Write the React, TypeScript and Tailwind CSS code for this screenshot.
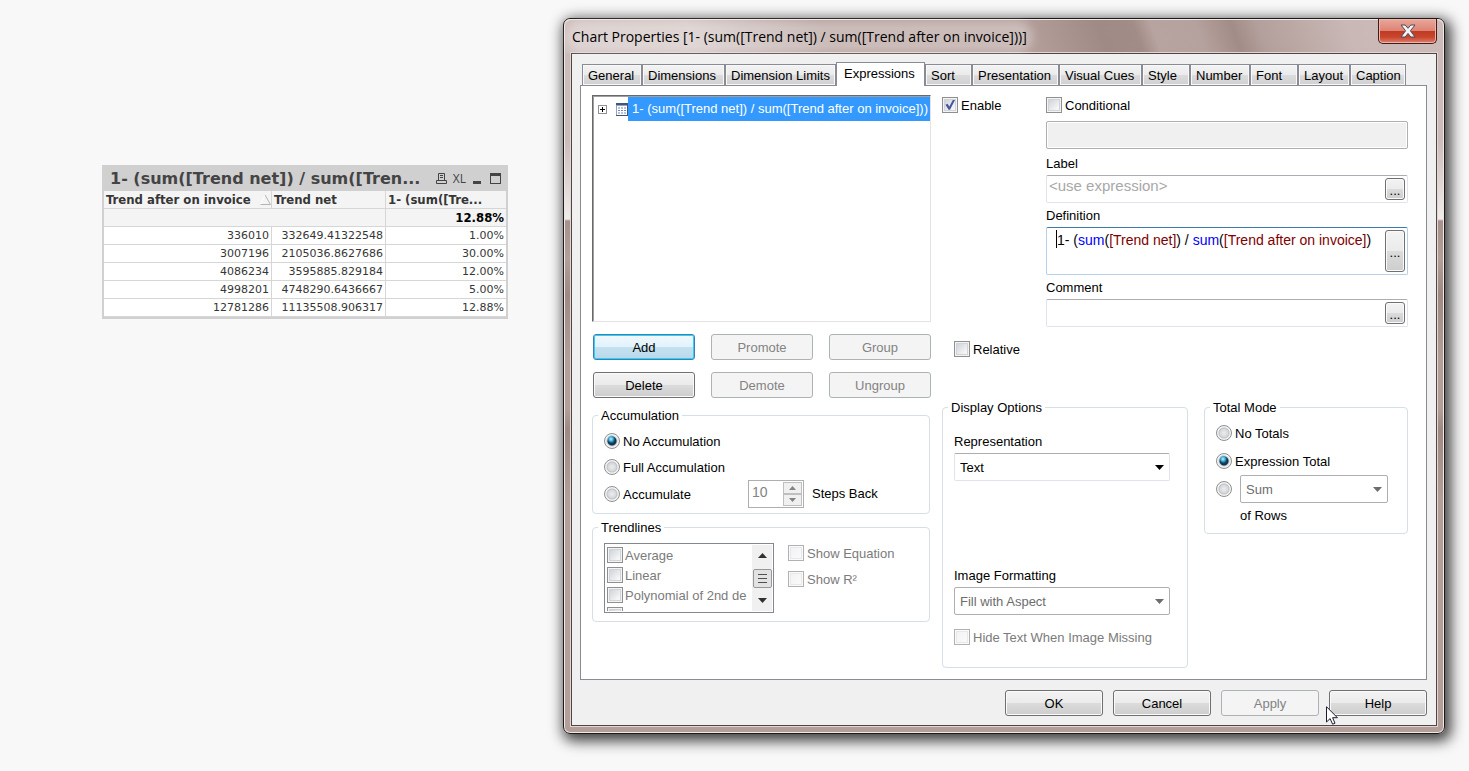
import type { ReactNode } from "react";

const tabs = [
  { label: "General", width: "w-[60px]" },
  { label: "Dimensions", width: "w-[83px]" },
  { label: "Dimension Limits", width: "w-[111px]" },
  { label: "Expressions", width: "w-[89px]", active: true },
  { label: "Sort", width: "w-[47px]" },
  { label: "Presentation", width: "w-[87px]" },
  { label: "Visual Cues", width: "w-[83px]" },
  { label: "Style", width: "w-[48px]" },
  { label: "Number", width: "w-[60px]" },
  { label: "Font", width: "w-[48px]" },
  { label: "Layout", width: "w-[52px]" },
  { label: "Caption", width: "w-[56px]" },
];

const rows = [
  ["336010", "332649.41322548", "1.00%"],
  ["3007196", "2105036.8627686", "30.00%"],
  ["4086234", "3595885.829184", "12.00%"],
  ["4998201", "4748290.6436667", "5.00%"],
  ["12781286", "11135508.906317", "12.88%"],
];

const trendlines = ["Average", "Linear", "Polynomial of 2nd de", "Polynomial of 3rd de"];

const definition = "1- (sum([Trend net]) / sum([Trend after on invoice])";

/* ---------- Basic controls ---------- */

function PushButton({ children, disabled, focused, className = "" }: {
  children: ReactNode;
  disabled?: boolean;
  focused?: boolean;
  className?: string;
}) {
  const look = disabled
    ? "border-[#adb2b5] bg-[#f4f4f4] text-[#838383]"
    : focused
      ? "border-[#3c7fb1] bg-[linear-gradient(#eff8fd_0%,#e2f2fb_49%,#c4e1f0_50%,#b8d9ea_100%)] shadow-[inset_0_0_0_1px_#2fd0f8]"
      : "border-[#707070] bg-[linear-gradient(#f3f3f3_0%,#ebebeb_49%,#dcdcdc_50%,#cdcdcd_100%)] shadow-[inset_0_0_0_1px_#fafafa]";
  return (
    <button type="button" disabled={disabled} className={`h-[26px] rounded-[3px] border pt-0.5 text-center ${look} ${className}`}>
      {children}
    </button>
  );
}

function EllipsisButton({ label }: { label: string }) {
  return (
    <button
      type="button"
      aria-label={label}
      className="flex w-5 shrink-0 items-center justify-center rounded-[3px] border border-[#707070] bg-[linear-gradient(#f3f3f3_0%,#ebebeb_49%,#dcdcdc_50%,#cdcdcd_100%)] pt-1 shadow-[inset_0_0_0_1px_#fafafa]"
    >
      ...
    </button>
  );
}

function Checkbox({ label, checked, disabled, tight }: {
  label: string;
  checked?: boolean;
  disabled?: boolean;
  tight?: boolean;
}) {
  return (
    <label className={`flex h-5 items-center whitespace-nowrap ${tight ? "gap-0.5" : "gap-[3px]"} ${disabled ? "text-[#7b7b7b]" : ""}`}>
      <span className="relative size-4 shrink-0">
        <input
          type="checkbox"
          defaultChecked={checked}
          disabled={disabled}
          className={`block size-4 appearance-none border ${disabled && !tight ? "border-[#b1b1b1] bg-[linear-gradient(135deg,#f0f1f3,#fbfbfb)] shadow-[inset_0_0_0_1px_#fafafa,inset_0_0_0_2px_#e6e8ea]" : "border-[#8e8f8f] bg-[linear-gradient(135deg,#c6cbd3,#f6f6f6_75%)] shadow-[inset_0_0_0_1px_#f4f4f4,inset_0_0_0_2px_#d0d4d8]"}`}
        />
        {checked && (
          <svg viewBox="0 0 16 16" className="pointer-events-none absolute inset-0 size-4">
            <path d="M3.5 7.8 L5.6 6.8 L7.3 9.4 L10.8 3 L13 3 L8 12.8 L6.6 12.8 Z" fill="#46599a" />
          </svg>
        )}
      </span>
      <span className="pt-0.5">{label}</span>
    </label>
  );
}

function Radio({ name, label, checked }: { name: string; label?: string; checked?: boolean }) {
  return (
    <label className="flex items-center gap-[3px] whitespace-nowrap">
      <input
        type="radio"
        name={name}
        defaultChecked={checked}
        aria-label={label ? undefined : "Aggregation of rows"}
        className="size-4 shrink-0 appearance-none rounded-full border border-[#8e8f8f] bg-[radial-gradient(circle,#eceded_0,#d6d8db_4px,#bfc2c6_5px,#f4f4f4_6px)] checked:bg-[radial-gradient(circle_at_6px_5px,#c8f0fb_0,#45b4dd_2px,transparent_4px),radial-gradient(circle,#14618c_0,#0b2f4a_4px,#c8ccd0_5px,#f4f4f4_6px)]"
      />
      {label && <span className="pt-0.5">{label}</span>}
    </label>
  );
}

function Select({ id, value, disabled, className = "" }: {
  id: string;
  value: string;
  disabled?: boolean;
  className?: string;
}) {
  return (
    <div className={`relative ${className}`}>
      <select
        id={id}
        disabled={disabled}
        defaultValue={value}
        className={`block h-7 w-full appearance-none rounded-xs border bg-white pt-0.5 pl-[5px] opacity-100 ${disabled ? "border-[#afafaf] text-[#6d6d6d]" : "border-[#e2e3ea] border-t-[#abadb3] text-black"}`}
      >
        <option>{value}</option>
      </select>
      <svg viewBox="0 0 9 5" className={`pointer-events-none absolute top-3 right-[6px] h-[5px] w-[9px] ${disabled ? "fill-[#6d6d6d]" : "fill-black"}`}>
        <path d="M0 0 H9 L4.5 5 Z" />
      </svg>
    </div>
  );
}

function Group({ title, children, className = "" }: { title: string; children: ReactNode; className?: string }) {
  return (
    <fieldset className={`min-w-0 rounded-[4px] border border-[#d5dfe5] pl-[11px] ${className}`}>
      <legend className="-ml-1.5 h-4 px-[3px] leading-[18px]">{title}</legend>
      {children}
    </fieldset>
  );
}

/* ---------- Straight table ---------- */

function ChartTable() {
  return (
    <section className="mt-[147px] w-[406px] shrink-0 border-2 border-[#d0d0d0] bg-white font-['DejaVu_Sans_Condensed','DejaVu_Sans',sans-serif] text-[#363636]">
      <header className="flex h-6 items-center bg-[#d0d0d0] pr-1 pl-1.5">
        <h2 className="flex-1 font-['DejaVu_Sans',sans-serif] text-[16px] font-bold whitespace-nowrap text-[#444444]">1- (sum([Trend net]) / sum([Tren...</h2>
        <div className="flex items-center gap-1.5 text-[#444444]">
          <button type="button" aria-label="Print" className="size-3">
            <svg viewBox="0 0 12 12" className="size-3" fill="none" stroke="currentColor">
              <path d="M3.5 7 V0.5 H9.5 V7 M5 2.5 H8 M5 4.5 H8 M1.5 7.5 H11.5 V10.5 H1.5 Z" />
            </svg>
          </button>
          <button type="button" className="font-['Open_Sans',sans-serif] text-[12px] leading-4">XL</button>
          <button type="button" aria-label="Minimize" className="size-3">
            <svg viewBox="0 0 12 12" className="size-3" fill="currentColor">
              <path d="M1 8 H9 V11 H1 Z" />
            </svg>
          </button>
          <button type="button" aria-label="Maximize" className="size-3">
            <svg viewBox="0 0 12 12" className="size-3" fill="currentColor">
              <path d="M0 0 H11 V11 H0 Z M1 3 V10 H10 V3 Z" fillRule="evenodd" />
            </svg>
          </button>
        </div>
      </header>
      <table className="w-full table-fixed border-separate border-spacing-0 leading-[17px]">
        <colgroup>
          <col className="w-[168px]" />
          <col className="w-[114px]" />
          <col />
        </colgroup>
        <thead className="bg-[#f4f4f4] text-[13px]">
          <tr className="h-[18px] text-left">
            <th className="border-r border-b border-[#d6d6d6] p-0 pl-0.5 whitespace-nowrap">
              <span className="flex items-center justify-between">
                Trend after on invoice
                <svg viewBox="0 0 11 11" className="size-[11px]" fill="none">
                  <path d="M0.5 10.5 L5 1" stroke="#ffffff" />
                  <path d="M5 1 L10.5 10.5 H0.5" stroke="#b4b4b4" />
                </svg>
              </span>
            </th>
            <th className="border-r border-b border-[#d6d6d6] p-0 pl-0.5">Trend net</th>
            <th className="border-b border-[#d6d6d6] p-0 pl-0.5">1- (sum([Tre...</th>
          </tr>
          <tr className="h-[18px] text-right text-black">
            <td colSpan={2} className="border-r border-b border-[#d6d6d6] p-0" />
            <td className="border-b border-[#d6d6d6] p-0 pr-0.5 font-bold">12.88%</td>
          </tr>
        </thead>
        <tbody className="font-['DejaVu_Sans',sans-serif] text-[11px]">
          {rows.map((row) => (
            <tr key={row[0]} className="h-[18px] text-right">
              <td className="border-r border-b border-[#d6d6d6] p-0 pr-0.5">{row[0]}</td>
              <td className="border-r border-b border-[#d6d6d6] p-0 pr-0.5">{row[1]}</td>
              <td className="border-b border-[#d6d6d6] p-0 pr-0.5">{row[2]}</td>
            </tr>
          ))}
        </tbody>
      </table>
    </section>
  );
}

/* ---------- Expressions tab ---------- */

function ExpressionColumn() {
  return (
    <div className="w-[339px] shrink-0">
      <div role="tree" aria-label="Expressions" className="h-[227px] overflow-hidden border border-[#e3e3e3] border-t-[#696969] border-l-[#696969] bg-white shadow-[inset_1px_1px_0_#a0a0a0]">
        <div role="treeitem" aria-selected="true" className="mt-px flex h-6 items-center pl-[5px]">
          <svg viewBox="0 0 9 9" className="size-[9px] shrink-0" fill="none">
            <rect x="0.5" y="0.5" width="8" height="8" fill="#ffffff" stroke="#919191" />
            <path d="M2 4.5 H7 M4.5 2 V7" stroke="#000000" />
          </svg>
          <svg viewBox="0 0 12 13" className="ml-[9px] h-[13px] w-3 shrink-0" fill="none">
            <rect width="12" height="13" fill="#47566f" />
            <path d="M0 2 H11 V12 H0 Z" fill="#ffffff" />
            <path d="M0.5 2 V12 M0 2.5 H11" stroke="#8ea3c8" />
            <path d="M2 5 H10 M2 7.5 H10 M2 10 H10" stroke="#7088b8" strokeDasharray="2 1" />
          </svg>
          <span className="flex-1 overflow-hidden bg-[#3399ff] pl-1 leading-6 whitespace-nowrap text-white">
            1- (sum([Trend net]) / sum([Trend after on invoice]))
          </span>
        </div>
      </div>

      <div className="mt-3 ml-px grid grid-cols-3 gap-x-4 gap-y-3">
        <PushButton focused>Add</PushButton>
        <PushButton disabled>Promote</PushButton>
        <PushButton disabled>Group</PushButton>
        <PushButton>Delete</PushButton>
        <PushButton disabled>Demote</PushButton>
        <PushButton disabled>Ungroup</PushButton>
      </div>

      <Group title="Accumulation" className="mt-[9px] mr-px pt-[5px] pb-[5px]">
        <div className="flex h-[26px] items-center">
          <Radio name="accumulation" label="No Accumulation" checked />
        </div>
        <div className="flex h-[26px] items-center">
          <Radio name="accumulation" label="Full Accumulation" />
        </div>
        <div className="flex h-7 items-center">
          <div className="w-36">
            <Radio name="accumulation" label="Accumulate" />
          </div>
          <div className="flex h-7 w-14 border border-[#afafaf] bg-white p-px">
            <input aria-label="Steps back" defaultValue="10" disabled className="w-8 min-w-0 flex-1 pb-1 pl-0.5 text-[14px] text-[#838383]" />
            <div className="flex w-[19px] flex-col">
              <button type="button" disabled aria-label="More steps" className="flex flex-1 items-center justify-center border border-[#bfbfbf] bg-[#f0f0f0]">
                <svg viewBox="0 0 7 4" className="h-1 w-[7px]" fill="#838383"><path d="M0 4 H7 L3.5 0 Z" /></svg>
              </button>
              <button type="button" disabled aria-label="Fewer steps" className="flex flex-1 items-center justify-center border border-[#bfbfbf] bg-[#f0f0f0]">
                <svg viewBox="0 0 7 4" className="h-1 w-[7px]" fill="#838383"><path d="M0 0 H7 L3.5 4 Z" /></svg>
              </button>
            </div>
          </div>
          <span className="ml-2">Steps Back</span>
        </div>
      </Group>

      <Group title="Trendlines" className="mt-[5px] mr-px pt-2 pb-2">
        <div className="flex gap-3.5">
          <div className="flex h-[70px] w-[170px] overflow-hidden border border-[#828790] p-px">
            <div className="flex-1 overflow-hidden pl-px">
              {trendlines.map((name) => (
                <Checkbox key={name} label={name} disabled tight />
              ))}
            </div>
            <div className="flex w-5 flex-col items-center justify-between bg-[#f0f0f0] py-2">
              <svg viewBox="0 0 9 5" className="h-[5px] w-[9px]" fill="#303030"><path d="M0 5 H9 L4.5 0 Z" /></svg>
              <svg viewBox="0 0 19 19" className="size-[19px]" fill="none">
                <rect x="0.5" y="0.5" width="18" height="18" rx="1.5" fill="#e2e2e2" stroke="#979797" />
                <path d="M5 5.5 H14 M5 9.5 H14 M5 13.5 H14" stroke="#505050" />
              </svg>
              <svg viewBox="0 0 9 5" className="h-[5px] w-[9px]" fill="#303030"><path d="M0 0 H9 L4.5 5 Z" /></svg>
            </div>
          </div>
          <div className="flex flex-col gap-1.5">
            <Checkbox label="Show Equation" disabled />
            <Checkbox label="Show R²" disabled />
          </div>
        </div>
      </Group>
    </div>
  );
}

function SettingsColumn() {
  return (
    <div className="min-w-0 flex-1">
      <div className="flex">
        <div className="w-[104px] shrink-0">
          <Checkbox label="Enable" checked />
        </div>
        <div className="min-w-0 flex-1">
          <Checkbox label="Conditional" />
          <input aria-label="Condition" disabled className="mt-1.5 block h-7 w-full rounded-xs border border-[#afafaf] bg-[#f0f0f0] shadow-[inset_0_0_0_1px_#ffffff]" />

          <label htmlFor="expr-label" className="mt-0.5 block h-6 leading-[26px]">Label</label>
          <div className="flex h-7 rounded-xs border border-[#e2e3ea] border-t-[#abadb3] p-0.5">
            <input id="expr-label" placeholder="<use expression>" className="min-w-0 flex-1 pb-1.5 text-[15px] placeholder:text-[#a8a8a8]" />
            <EllipsisButton label="Edit label" />
          </div>

          <label htmlFor="expr-definition" className="block h-6 leading-[26px]">Definition</label>
          <div className="flex h-12 rounded-xs border border-[#b5cfe7] border-t-[#3d7bad] p-0.5">
            {/* Coloured layer under a transparent textarea */}
            <div className="grid min-w-0 flex-1 overflow-hidden text-[14px] leading-5 whitespace-pre">
              <div aria-hidden="true" className="col-start-1 row-start-1 flex pl-[7px]">
                <span className="h-[18px] w-px bg-black" />
                1- (<span className="text-[#0000ff]">sum</span>(<span className="text-[#800000]">[Trend net]</span>) / <span className="text-[#0000ff]">sum</span>(<span className="text-[#800000]">[Trend after on invoice]</span>)
              </div>
              <textarea
                id="expr-definition"
                defaultValue={definition}
                wrap="off"
                className="col-start-1 row-start-1 resize-none overflow-hidden bg-transparent pl-2 text-transparent caret-black outline-none"
              />
            </div>
            <EllipsisButton label="Edit definition" />
          </div>

          <label htmlFor="expr-comment" className="block h-6 leading-[26px]">Comment</label>
          <div className="flex h-7 rounded-xs border border-[#e2e3ea] border-t-[#abadb3] p-0.5">
            <input id="expr-comment" className="min-w-0 flex-1 text-[15px]" />
            <EllipsisButton label="Edit comment" />
          </div>
        </div>
      </div>

      <div className="mt-3 pl-3">
        <Checkbox label="Relative" />
      </div>

      <div className="mt-10 flex items-start gap-4">
        <Group title="Display Options" className="w-[246px] shrink-0 pt-3.5 pr-[17px] pb-5">
          <label htmlFor="representation" className="block h-6 leading-[26px]">Representation</label>
          <Select id="representation" value="Text" />
          <label htmlFor="image-formatting" className="mt-[82px] block h-6 leading-[26px]">Image Formatting</label>
          <Select id="image-formatting" value="Fill with Aspect" disabled />
          <div className="mt-3">
            <Checkbox label="Hide Text When Image Missing" disabled />
          </div>
        </Group>

        <Group title="Total Mode" className="flex-1 pt-1 pr-[19px] pb-1.5">
          <div className="flex h-7 items-center">
            <Radio name="total" label="No Totals" />
          </div>
          <div className="flex h-7 items-center">
            <Radio name="total" label="Expression Total" checked />
          </div>
          <div className="flex h-7 items-center gap-2">
            <Radio name="total" />
            <Select id="aggregation" value="Sum" disabled className="flex-1" />
          </div>
          <label htmlFor="aggregation" className="block h-6 pl-6 leading-[26px]">of Rows</label>
        </Group>
      </div>
    </div>
  );
}

/* ---------- Dialog window ---------- */

function PropertiesDialog() {
  return (
    <section
      role="dialog"
      aria-labelledby="dialog-title"
      className="min-w-[860px] flex-1 rounded-[7px] border border-[#1e1a1a] bg-[linear-gradient(#d0c2c0_0,#cbbbb9_34px,#cbbbb9_120px,#efecea_200px,#a8918c_202px,#b39e9a_240px,#a08985_275px,#b39e9a_340px,#b39e9a_390px,#a08985_410px,#b39e9a_480px,#b39e9a_100%)] px-[7px] pb-[7px] shadow-[inset_0_0_0_1px_#f0e8e6,3px_4px_14px_3px_rgba(0,0,0,0.75)]"
    >
      <header className="-mx-1.5 flex h-[34px] items-start justify-between rounded-t-[6px] bg-[linear-gradient(70deg,#cfc0be_0%,#d2c5c3_15%,#b5a09c_30%,#b5a09c_52%,#a08a86_61%,#a28c88_65%,#b7a39f_67%,#b5a19d_72%,#a28c88_76%,#b39f9b_79%,#c9b8b6_89%,#cbbbb9_100%)] pl-[7px] shadow-[inset_0_1px_0_#f0e8e6]">
        <h1 id="dialog-title" className="mt-2 rounded-full bg-white/30 font-['Open_Sans','Noto_Sans',sans-serif] text-[14px] leading-5 whitespace-nowrap shadow-[0_0_8px_6px_rgba(255,255,255,0.3)]">
          Chart Properties [1- (sum([Trend net]) / sum([Trend after on invoice]))]
        </h1>
        <button
          type="button"
          aria-label="Close"
          className="mr-1.5 flex h-[25px] w-[59px] items-center justify-center rounded-b-[5px] border border-t-0 border-[#431a16] bg-[linear-gradient(#eaa79b_0%,#dd8475_48%,#bf3a22_50%,#c9452c_75%,#dd8070_100%)] shadow-[inset_0_0_0_1px_#f0b5aa]"
        >
          <svg viewBox="0 0 16 14" className="h-3.5 w-4">
            <path d="M1 1 H5.2 L8 4.3 L10.8 1 H15 L10.4 6.8 L15 13 H10.8 L8 9.4 L5.2 13 H1 L5.6 6.8 Z" fill="#f4f4f4" stroke="#4c4a58" />
          </svg>
        </button>
      </header>

      <div className="border border-[#4f4644] bg-[#f0f0f0] pt-2 pr-[9px] pb-[9px] pl-2 shadow-[0_0_0_1px_#e2d6d4]">
        <div role="tablist" className="flex h-[23px] items-end pl-0.5">
          {tabs.map((tab) => (
            <button
              key={tab.label}
              type="button"
              role="tab"
              aria-selected={Boolean(tab.active)}
              className={`${tab.width} shrink-0 overflow-hidden border border-b-0 border-[#898c95] text-left whitespace-nowrap ${tab.active ? "-mb-px h-6 bg-white pb-0.5 pl-[7px]" : "h-[21px] bg-[linear-gradient(#f3f3f3_0%,#ebebeb_49%,#dcdcdc_50%,#d0d0d0_100%)] pt-0.5 pl-[5px] shadow-[inset_0_0_0_1px_#f8f8f8]"}`}
            >
              {tab.label}
            </button>
          ))}
        </div>

        <div role="tabpanel" className="flex gap-[11px] border border-[#898c95] bg-white pt-[9px] pr-[18px] pb-[11px] pl-[11px]">
          <ExpressionColumn />
          <SettingsColumn />
        </div>

        <footer className="mt-2.5 flex justify-end gap-2.5">
          <PushButton className="w-[98px]">OK</PushButton>
          <PushButton className="w-[98px]">Cancel</PushButton>
          <PushButton disabled className="w-[98px]">Apply</PushButton>
          <div className="relative">
            <PushButton className="w-[98px]">Help</PushButton>
            {/* Mouse pointer */}
            <svg viewBox="0 0 12 19" className="pointer-events-none absolute top-4 -left-[3px] h-[19px] w-3">
              <path d="M0.5 0.7 V16 L4.1 12.6 L6.6 18.2 L9 17.2 L6.6 11.7 H11.4 Z" fill="#ffffff" stroke="#1c1c30" />
            </svg>
          </div>
        </footer>
      </div>
    </section>
  );
}

export default function App() {
  return (
    <main className="flex min-h-screen items-start gap-[55px] bg-[#f8f8f8] pt-[18px] pr-6 pb-9 pl-[102px] font-['Liberation_Sans',Arial,sans-serif] text-[13px] leading-4 text-black">
      <ChartTable />
      <PropertiesDialog />
    </main>
  );
}
